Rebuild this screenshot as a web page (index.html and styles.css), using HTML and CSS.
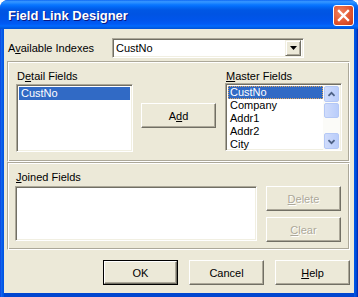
FILE: index.html
```html
<!DOCTYPE html>
<html lang="en">

<head>
    <meta charset="UTF-8">
    <title>Field Link Designer</title>
    <link rel="stylesheet" href="styles.css">
</head>

<body>
    <div class="window">
        <div class="titlebar">
            <span class="title">Field Link Designer</span>
            <div class="close-btn">
                <svg width="13" height="13" viewBox="0 0 13 13">
                    <path d="M2 2 L11 11 M11 2 L2 11" stroke="#fff" stroke-width="2.4" stroke-linecap="square" />
                </svg>
            </div>
        </div>

        <div class="client">
            <div class="index-row">
                <label class="index-label">A<u>v</u>ailable Indexes</label>
                <div class="combo">
                    <span class="combo-text">CustNo</span>
                    <div class="combo-btn">
                        <svg width="7" height="4" viewBox="0 0 7 4">
                            <polygon points="0,0 7,0 3.5,4" fill="#000" />
                        </svg>
                    </div>
                </div>
            </div>

            <div class="panel upper">
                <div class="col">
                    <div class="caption">D<u>e</u>tail Fields</div>
                    <div class="listbox detail-list">
                        <div class="item selected">CustNo</div>
                    </div>
                </div>
                <div class="col middle">
                    <button class="btn">A<u>d</u>d</button>
                </div>
                <div class="col master">
                    <div class="caption"><u>M</u>aster Fields</div>
                    <div class="listbox master-list">
                        <div class="items">
                            <div class="item selected focused">CustNo</div>
                            <div class="item">Company</div>
                            <div class="item">Addr1</div>
                            <div class="item">Addr2</div>
                            <div class="item">City</div>
                        </div>
                        <div class="scrollbar">
                            <div class="sb-btn">
                                <svg width="15" height="15" viewBox="0 0 15 15">
                                    <path d="M4 9 L7.5 5.5 L11 9" stroke="#4D6185" stroke-width="2" fill="none" />
                                </svg>
                            </div>
                            <div class="sb-thumb"></div>
                            <div class="sb-track"></div>
                            <div class="sb-btn">
                                <svg width="15" height="15" viewBox="0 0 15 15">
                                    <path d="M4 6 L7.5 9.5 L11 6" stroke="#4D6185" stroke-width="2" fill="none" />
                                </svg>
                            </div>
                        </div>
                    </div>
                </div>
            </div>

            <div class="panel lower">
                <div class="col">
                    <div class="caption"><u>J</u>oined Fields</div>
                    <div class="listbox joined-list"></div>
                </div>
                <div class="col side-buttons">
                    <button class="btn disabled"><u>D</u>elete</button>
                    <button class="btn disabled"><u>C</u>lear</button>
                </div>
            </div>

            <div class="button-row">
                <button class="btn default">OK</button>
                <button class="btn">Cancel</button>
                <button class="btn"><u>H</u>elp</button>
            </div>
        </div>
    </div>
</body>

</html>
```

FILE: styles.css
```css
body {
    margin: 0;
    background: #fff;
    font-family: "Liberation Sans", Arial, sans-serif;
    font-size: 11px;
    color: #000;
}

.window {
    width: 358px;
    height: 297px;
    border-radius: 8px 8px 0 0;
    overflow: hidden;
    background: linear-gradient(to right, #0831D9 0, #166AEE 1px, #0055E5 3px, #0055E5 355px, #0042C8 357px, #0019A8 358px);
    display: flex;
    flex-direction: column;
}

.titlebar {
    height: 29px;
    flex: none;
    display: flex;
    align-items: center;
    justify-content: space-between;
    padding: 0 4px 0 8px;
    background: linear-gradient(to bottom, #0058EE 0, #3593FF 1px, #288EFF 3px, #127DFF 4px, #036FFC 6px, #0262EE 8px, #0057E5 10px, #0054E3 14px, #0055EB 20px, #005BF5 24px, #026AFE 26px, #0062EF 27px, #0052D6 29px);
}

.title {
    color: #fff;
    font-weight: bold;
    font-size: 13px;
    text-shadow: 1px 1px #0A1883;
    margin-top: 1px;
}

.close-btn {
    width: 21px;
    height: 21px;
    box-sizing: border-box;
    border: 1px solid #fff;
    border-radius: 3px;
    background: radial-gradient(circle at 35% 35%, #F0825E, #E0532E 60%, #C23A17);
    display: flex;
    align-items: center;
    justify-content: center;
    margin-top: 2px;
}

.client {
    flex: none;
    margin: 0 4px;
    height: 264px;
    background: #ECE9D8;
    border-bottom: 4px solid #0046D0;
    box-shadow: 0 4px 0 0 #001E9F;
}

.index-row {
    display: flex;
    align-items: center;
    margin-top: 9px;
    padding-left: 4px;
    height: 20px;
}

.index-label {
    width: 104px;
}

.combo {
    width: 192px;
    height: 20px;
    box-sizing: border-box;
    background: #fff;
    border-top: 1px solid #ACA899;
    border-left: 1px solid #ACA899;
    border-right: 1px solid #fff;
    border-bottom: 1px solid #fff;
    box-shadow: inset 1px 1px #716F64, inset -1px -1px #F1EFE2;
    display: flex;
    align-items: center;
    justify-content: space-between;
    padding: 1px 2px 1px 3px;
}

.combo-text {
    font-size: 11px;
}

.combo-btn {
    width: 16px;
    height: 16px;
    box-sizing: border-box;
    background: #ECE9D8;
    border-top: 1px solid #F1EFE2;
    border-left: 1px solid #F1EFE2;
    border-right: 1px solid #716F64;
    border-bottom: 1px solid #716F64;
    box-shadow: inset 1px 1px #fff, inset -1px -1px #ACA899;
    display: flex;
    align-items: center;
    justify-content: center;
}

.panel {
    display: flex;
    margin-left: 3px;
    width: 343px;
    box-sizing: border-box;
    border-top: 1px solid #ACA899;
    border-left: 1px solid #ACA899;
    border-right: 1px solid #fff;
    border-bottom: 1px solid #fff;
    box-shadow: inset 1px 1px #fff, inset -1px -1px #ACA899;
}

.upper {
    margin-top: 3px;
    height: 101px;
    padding: 7px 0 0 8px;
}

.lower {
    height: 88px;
    padding: 7px 0 0 7px;
}

.col {
    display: flex;
    flex-direction: column;
}

.caption {
    height: 14px;
    line-height: 14px;
    padding-left: 1px;
}

.listbox {
    box-sizing: border-box;
    background: #fff;
    border-top: 1px solid #ACA899;
    border-left: 1px solid #ACA899;
    border-right: 1px solid #fff;
    border-bottom: 1px solid #fff;
    box-shadow: inset 1px 1px #716F64, inset -1px -1px #F1EFE2;
    padding: 1px 1px 0 1px;
}

.detail-list {
    width: 117px;
    height: 68px;
    margin-top: 1px;
    padding: 2px;
}

.item {
    height: 13px;
    line-height: 13px;
    padding-left: 2px;
    font-size: 11px;
}

.item.selected {
    background: #316AC5;
    color: #fff;
}

.item.focused {
    box-sizing: border-box;
    border: 1px dotted #E0A860;
    padding-left: 1px;
    line-height: 11px;
}

.middle {
    margin-left: 8px;
    padding-top: 34px;
}

.master {
    margin-left: 9px;
}

.master-list {
    width: 117px;
    height: 68px;
    display: flex;
}

.master-list .items {
    flex: 1;
    overflow: hidden;
    padding: 1px 0 0 1px;
}

.scrollbar {
    width: 17px;
    display: flex;
    flex-direction: column;
    background: #FBFBF8;
    padding: 1px 0;
}

.sb-btn,
.sb-thumb {
    box-sizing: border-box;
    border: 1px solid #B4C8F6;
    border-radius: 2px;
    background: linear-gradient(to right, #D0DCFB, #B9CDFB);
    margin: 0 1px;
}

.sb-btn {
    height: 16px;
    display: flex;
    align-items: center;
    justify-content: center;
}

.sb-thumb {
    height: 15px;
    margin-top: 1px;
}

.sb-track {
    flex: 1;
}

.joined-list {
    width: 242px;
    height: 55px;
    margin-top: 2px;
}

.side-buttons {
    margin-left: 9px;
    padding-top: 16px;
    gap: 6px;
}

.btn {
    width: 75px;
    height: 25px;
    box-sizing: border-box;
    font-family: "Liberation Sans", Arial, sans-serif;
    font-size: 11px;
    color: #000;
    background: #ECE9D8;
    border-top: 1px solid #fff;
    border-left: 1px solid #fff;
    border-right: 1px solid #716F64;
    border-bottom: 1px solid #716F64;
    box-shadow: inset -1px -1px #ACA899;
    padding: 0;
    margin: 0;
}

.btn.disabled {
    color: #ACA899;
    text-shadow: 1px 1px #fff;
}

.btn.default {
    outline: 1px solid #000;
    outline-offset: -1px;
    border-top: 2px solid #fff;
    border-left: 2px solid #fff;
    border-right: 2px solid #716F64;
    border-bottom: 2px solid #716F64;
}

.button-row {
    display: flex;
    justify-content: flex-end;
    gap: 11px;
    padding-right: 4px;
    margin-top: 10px;
}
```
